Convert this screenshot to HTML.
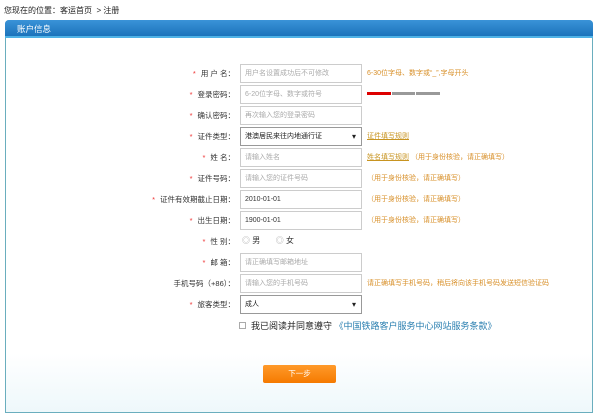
<!DOCTYPE html>
<html><head><meta charset="utf-8"><style>
*{margin:0;padding:0;box-sizing:border-box}
body{width:600px;height:417px;background:#fff;font-family:"Liberation Sans","Noto Sans CJK SC",sans-serif;font-size:8px;color:#333;position:relative;overflow:hidden}
.a{position:absolute;white-space:nowrap}
.crumb{left:4px;top:5px;font-size:8px;color:#222}
.panel{left:5px;top:20px;width:588px;height:393px;border:1px solid #6aaebe;border-radius:4px 4px 0 0;background:linear-gradient(#fff 85%,#eef8fb)}
.hd{left:5px;top:20px;width:588px;height:18px;background:linear-gradient(#3a93d8,#1b73bb);border-radius:4px 4px 0 0;border-bottom:2px solid #4fb2e6;color:#fff;font-size:8.5px;padding:3px 0 0 12px}
.lb{right:365px;text-align:right;color:#333;font-size:7.5px}
.lb b{color:#e33;font-weight:normal;margin-right:5px}
.in{left:240px;width:122px;height:19px;border:1px solid #ccc;background:#fff;color:#aaa;font-size:7px;padding:0 4px;line-height:17px}
.in.v{color:#333}
.sel{border-color:#999;color:#222}
.sel:after{content:"▾";position:absolute;right:5px;top:0;color:#222;font-size:8px}
.tip{left:367px;color:#d8902a;font-size:7px}
.lnk{text-decoration:underline;color:#c89420}
</style></head><body>
<div class="a crumb">您现在的位置：客运首页 &nbsp;&gt; 注册</div>
<div class="a panel"></div>
<div class="a hd">账户信息</div>

<div class="a lb" style="top:68px"><b>*</b>用 户 名：</div>
<div class="a in" style="top:64px">用户名设置成功后不可修改</div>
<div class="a tip" style="top:68px">6-30位字母、数字或“_”,字母开头</div>

<div class="a lb" style="top:89px"><b>*</b>登录密码：</div>
<div class="a in" style="top:85px">6-20位字母、数字或符号</div>
<div class="a" style="left:367px;top:92px;width:24px;height:3px;background:#d00"></div>
<div class="a" style="left:392px;top:92px;width:23px;height:3px;background:#999"></div>
<div class="a" style="left:416px;top:92px;width:24px;height:3px;background:#999"></div>

<div class="a lb" style="top:110px"><b>*</b>确认密码：</div>
<div class="a in" style="top:106px">再次输入您的登录密码</div>

<div class="a lb" style="top:131px"><b>*</b>证件类型：</div>
<div class="a in sel" style="top:127px">港澳居民来往内地通行证</div>
<div class="a tip lnk" style="top:131px">证件填写规则</div>

<div class="a lb" style="top:152px"><b>*</b>姓 名：</div>
<div class="a in" style="top:148px">请输入姓名</div>
<div class="a tip" style="top:152px"><span class="lnk">姓名填写规则</span> （用于身份核验，请正确填写）</div>

<div class="a lb" style="top:173px"><b>*</b>证件号码：</div>
<div class="a in" style="top:169px">请输入您的证件号码</div>
<div class="a tip" style="top:173px">（用于身份核验，请正确填写）</div>

<div class="a lb" style="top:194px"><b>*</b>证件有效期截止日期：</div>
<div class="a in v" style="top:190px">2010-01-01</div>
<div class="a tip" style="top:194px">（用于身份核验，请正确填写）</div>

<div class="a lb" style="top:215px"><b>*</b>出生日期：</div>
<div class="a in v" style="top:211px">1900-01-01</div>
<div class="a tip" style="top:215px">（用于身份核验，请正确填写）</div>

<div class="a lb" style="top:236px"><b>*</b>性 别：</div>
<div class="a" style="left:242px;top:235px;font-size:8px"><span style="color:#aaa">◎</span> 男 &nbsp;&nbsp;&nbsp;&nbsp;&nbsp;&nbsp;<span style="color:#aaa">◎</span> 女</div>

<div class="a lb" style="top:257px"><b>*</b>邮 箱：</div>
<div class="a in" style="top:253px">请正确填写邮箱地址</div>

<div class="a lb" style="top:278px">手机号码（+86）：</div>
<div class="a in" style="top:274px">请输入您的手机号码</div>
<div class="a tip" style="top:278px">请正确填写手机号码，稍后将向该手机号码发送短信验证码</div>

<div class="a lb" style="top:299px"><b>*</b>旅客类型：</div>
<div class="a in sel" style="top:295px">成人</div>

<div class="a" style="left:239px;top:322px;width:7px;height:7px;border:1px solid #aaa"></div>
<div class="a" style="left:251px;top:319px;font-size:9px;color:#222">我已阅读并同意遵守 <span style="color:#2a7fb0">《中国铁路客户服务中心网站服务条款》</span></div>

<div class="a" style="left:263px;top:365px;width:73px;height:18px;background:linear-gradient(#ff9a2a,#f57a00);border-radius:2px;color:#fff;font-size:7.5px;text-align:center;line-height:18px">下一步</div>
</body></html>
